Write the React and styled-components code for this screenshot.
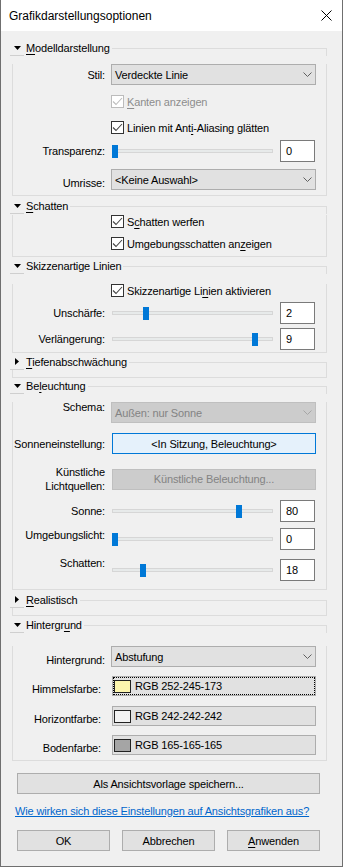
import React from 'react';
import styled, { createGlobalStyle } from 'styled-components';

const GlobalStyle = createGlobalStyle`
  html, body {
    margin: 0;
    padding: 0;
    background: #f0f0f0;
  }
  body {
    font-family: "Liberation Sans", Arial, sans-serif;
    font-size: 11px;
    letter-spacing: -0.15px;
    color: #000;
  }
  * {
    box-sizing: border-box;
  }
`;

// Window frame
const Window = styled.div`
  width: 343px;
  height: 867px;
  display: flex;
  flex-direction: column;
  background: #f0f0f0;
  border: 1px solid #6f6f6f;
  border-top: none;
`;

const TitleBar = styled.div`
  height: 31px;
  flex: none;
  display: flex;
  align-items: center;
  justify-content: space-between;
  padding: 0 10px 0 8px;
  background: #fff;
  font-size: 12px;
  letter-spacing: 0;
`;

const Content = styled.div`
  padding: 9px 15px 0 11px;
`;

// Collapsible group box
const Group = styled.section`
  margin-top: ${p => p.$mt || 0}px;
`;

const GroupHeader = styled.div`
  display: flex;
  height: 16px;
  line-height: 16px;
`;

const Toggle = styled.span`
  flex: none;
  width: 14px;
  height: 16px;
  margin-left: -2px;
  display: flex;
  align-items: center;
  justify-content: center;
  border-bottom: 1px solid #cfcfcf;
`;

const GroupTitle = styled.span`
  padding-left: 2px;
  white-space: nowrap;
`;

const HeaderRule = styled.span`
  flex: 1;
  margin: 8px 0 0 2px;
  border-top: 1px solid #dcdcdc;
  border-right: 1px solid #dcdcdc;
`;

const GroupBody = styled.div`
  border: 1px solid #dcdcdc;
  border-top: none;
  padding-bottom: ${p => p.$pb || 0}px;
  min-height: ${p => p.$collapsed ? 8 : 0}px;
`;

// Rows
const FieldRow = styled.div`
  display: grid;
  grid-template-columns: ${p => p.$labelWidth || 92}px auto;
  column-gap: ${p => p.$gap || 6}px;
  align-items: center;
  margin-top: ${p => p.$mt || 0}px;
`;

const SliderRow = styled.div`
  display: grid;
  grid-template-columns: 92px 161px 35px;
  column-gap: 7px;
  align-items: center;
  margin-top: ${p => p.$mt || 0}px;
`;

const Label = styled.span`
  text-align: right;
  line-height: 14px;
  white-space: nowrap;
  align-self: ${p => p.$align || 'center'};
  margin-top: ${p => p.$nudge || 0}px;
`;

const CheckRow = styled.label`
  display: flex;
  align-items: center;
  gap: 3px;
  margin: ${p => p.$mt || 0}px 0 0 98px;
  height: 13px;
  color: ${p => p.$disabled ? '#8d8d8d' : '#000'};
`;

const Box = styled.span`
  flex: none;
  width: 13px;
  height: 13px;
  background: #fff;
  border: 1px solid ${p => p.$disabled ? '#bcbcbc' : '#333'};
  display: flex;
  align-items: center;
  justify-content: center;
`;

const SelectBox = styled.div`
  width: 205px;
  height: 21px;
  display: flex;
  align-items: center;
  justify-content: space-between;
  padding: 0 3px 0 3px;
  background: ${p => p.$disabled ? '#cccccc' : '#e1e1e1'};
  border: 1px solid ${p => p.$disabled ? '#bfbfbf' : '#adadad'};
  color: ${p => p.$disabled ? '#838383' : '#000'};
`;

const PushButton = styled.div`
  width: ${p => p.$w || 204}px;
  height: 21px;
  display: flex;
  align-items: center;
  justify-content: center;
  margin-top: ${p => p.$mt || 0}px;
  margin-left: ${p => p.$ml || 0}px;
  background: ${p => p.$active ? '#e5f1fb' : p.$disabled ? '#cccccc' : '#e1e1e1'};
  border: 1px solid ${p => p.$active ? '#0078d7' : p.$disabled ? '#bfbfbf' : '#adadad'};
  color: ${p => p.$disabled ? '#838383' : '#000'};
  white-space: nowrap;
`;

const Track = styled.div`
  position: relative;
  height: 13px;
  display: flex;
  align-items: center;
`;

const Rail = styled.div`
  width: 100%;
  height: 4px;
  background: #e7eaea;
  border: 1px solid #d6d6d6;
`;

const Thumb = styled.div`
  position: absolute;
  top: 0;
  width: 6px;
  height: 13px;
  background: #0078d7;
`;

const ValueBox = styled.div`
  width: 35px;
  height: 22px;
  background: #fff;
  border: 1px solid #7a7a7a;
  padding-left: 5px;
  line-height: 20px;
`;

const ColorButton = styled.div`
  width: 204px;
  height: 20px;
  display: flex;
  align-items: center;
  gap: 4px;
  padding-left: 1px;
  background: #e1e1e1;
  border: 1px solid #adadad;
  outline: ${p => p.$focused ? '1px dotted #000' : 'none'};
  outline-offset: -2px;
`;

const Swatch = styled.span`
  width: 17px;
  height: 13px;
  border: 1px solid #222;
  background: ${p => p.$color};
`;

const Footer = styled.div`
  display: flex;
  flex-direction: column;
`;

const HelpLink = styled.a`
  margin: 10px 0 0 3px;
  line-height: 14px;
  color: #0066cc;
  text-decoration: underline;
  white-space: nowrap;
`;

const ButtonBar = styled.div`
  display: flex;
  gap: 12px;
  margin: 12px 0 0 5px;
`;

const Key = styled.u`
  text-decoration: underline;
  text-underline-offset: 2px;
`;

const Chevron = ({ color = '#606060' }) => (
  <svg width="9" height="5" viewBox="0 0 9 5">
    <polyline points="0.5,0.5 4.5,4.5 8.5,0.5" fill="none" stroke={color} strokeWidth="1" />
  </svg>
);

const Select = ({ value, disabled }) => (
  <SelectBox $disabled={disabled}>
    <span>{value}</span>
    <Chevron color={disabled ? '#a6a6a6' : '#606060'} />
  </SelectBox>
);

const Checkbox = ({ children, disabled, mt }) => (
  <CheckRow $mt={mt} $disabled={disabled}>
    <Box $disabled={disabled}>
      <svg width="11" height="11" viewBox="0 0 11 11">
        <polyline points="1,5.5 4,8.5 10,2" fill="none" stroke={disabled ? '#bcbcbc' : '#444'} strokeWidth="1.1" />
      </svg>
    </Box>
    <span>{children}</span>
  </CheckRow>
);

const Slider = ({ label, value, max = 100, mt, align, nudge }) => (
  <SliderRow $mt={mt}>
    <Label $align={align} $nudge={nudge}>{label}</Label>
    <Track>
      <Rail />
      <Thumb style={{ left: Math.round((value / max) * 155) }} />
    </Track>
    <ValueBox>{value}</ValueBox>
  </SliderRow>
);

const Section = ({ title, open = true, mt, pb, children }) => (
  <Group $mt={mt}>
    <GroupHeader>
      <Toggle>
        {open ? (
          <svg width="7" height="4" viewBox="0 0 7 4"><polygon points="0,0 7,0 3.5,4" fill="#000" /></svg>
        ) : (
          <svg width="4" height="7" viewBox="0 0 4 7"><polygon points="0,0 4,3.5 0,7" fill="#000" /></svg>
        )}
      </Toggle>
      <GroupTitle>{title}</GroupTitle>
      <HeaderRule />
    </GroupHeader>
    <GroupBody $pb={pb} $collapsed={!open}>{children}</GroupBody>
  </Group>
);

const ColorRow = ({ label, rgb, color, mt, focused }) => (
  <FieldRow $mt={mt} $labelWidth={88} $gap={11}>
    <Label $align="end">{label}</Label>
    <ColorButton $focused={focused}>
      <Swatch $color={color} />
      <span>RGB {rgb}</span>
    </ColorButton>
  </FieldRow>
);

export default function App() {
  return (
    <>
      <GlobalStyle />
      <Window>
        <TitleBar>
          <span>Grafikdarstellungsoptionen</span>
          <svg width="11" height="11" viewBox="0 0 11 11">
            <path d="M0.5 0.5 L10.5 10.5 M10.5 0.5 L0.5 10.5" stroke="#000" strokeWidth="1" />
          </svg>
        </TitleBar>
        <Content>
          <Section title={<><Key>M</Key>odelldarstellung</>} pb={5}>
            <FieldRow $mt={8}>
              <Label>Stil:</Label>
              <Select value="Verdeckte Linie" />
            </FieldRow>
            <Checkbox mt={10} disabled><Key>K</Key>anten anzeigen</Checkbox>
            <Checkbox mt={13}>Linien mit Ant<Key>i</Key>-Aliasing glätten</Checkbox>
            <Slider label="Transparenz:" value={0} mt={6} />
            <FieldRow $mt={7}>
              <Label $align="end">Umrisse:</Label>
              <Select value="<Keine Auswahl>" />
            </FieldRow>
          </Section>

          <Section title={<><Key>S</Key>chatten</>} mt={2} pb={6}>
            <Checkbox mt={1}>S<Key>c</Key>hatten werfen</Checkbox>
            <Checkbox mt={9}>Umgebungsschatten an<Key>z</Key>eigen</Checkbox>
          </Section>

          <Section title="Skizzenartige Linien" mt={1} pb={2}>
            <Checkbox mt={10}>Skizzenartige Li<Key>n</Key>ien aktivieren</Checkbox>
            <Slider label="Unschärfe:" value={2} max={10} mt={5} />
            <Slider label="Verlängerung:" value={9} max={10} mt={4} />
          </Section>

          <Section title={<><Key>T</Key>iefenabschwächung</>} open={false} mt={1} />

          <Section title={<>Be<Key>l</Key>euchtung</>} pb={8}>
            <FieldRow $mt={8}>
              <Label $align="start" $nudge={-2}>Schema:</Label>
              <Select value="Außen: nur Sonne" disabled />
            </FieldRow>
            <FieldRow $mt={10} $gap={7}>
              <Label>Sonneneinstellung:</Label>
              <PushButton $active>&lt;In Sitzung, Beleuchtung&gt;</PushButton>
            </FieldRow>
            <FieldRow $mt={11} $gap={7}>
              <Label>Künstliche<br />Lichtquellen:</Label>
              <PushButton $disabled>Künstliche Beleuchtung...</PushButton>
            </FieldRow>
            <Slider label="Sonne:" value={80} mt={7} />
            <Slider label="Umgebungslicht:" value={0} mt={6} align="start" />
            <Slider label="Schatten:" value={18} mt={9} align="start" nudge={-3} />
          </Section>

          <Section title={<><Key>R</Key>ealistisch</>} open={false} mt={2} />

          <Section title={<>Hintergr<Key>u</Key>nd</>} mt={1} pb={5}>
            <FieldRow $mt={13}>
              <Label $align="end">Hintergrund:</Label>
              <Select value="Abstufung" />
            </FieldRow>
            <ColorRow label="Himmelsfarbe:" rgb="252-245-173" color="rgb(252,245,173)" mt={9} focused />
            <ColorRow label="Horizontfarbe:" rgb="242-242-242" color="rgb(242,242,242)" mt={10} />
            <ColorRow label="Bodenfarbe:" rgb="165-165-165" color="rgb(165,165,165)" mt={9} />
          </Section>

          <Footer>
            <PushButton $w={303} $mt={12} $ml={5}>Als Ansichtsvorlage speichern...</PushButton>
            <HelpLink>Wie wirken sich diese Einstellungen auf Ansichtsgrafiken aus?</HelpLink>
            <ButtonBar>
              <PushButton $w={93}>OK</PushButton>
              <PushButton $w={93}>Abbrechen</PushButton>
              <PushButton $w={93}><Key>A</Key>nwenden</PushButton>
            </ButtonBar>
          </Footer>
        </Content>
      </Window>
    </>
  );
}
